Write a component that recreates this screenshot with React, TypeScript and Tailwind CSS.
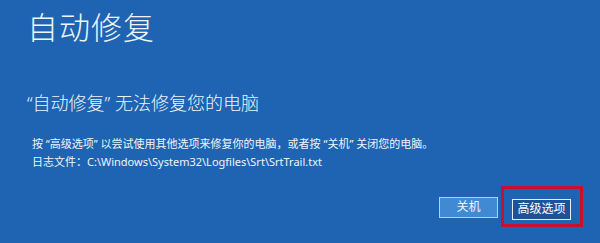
const font = "font-['Noto_Sans','Noto_Sans_CJK_SC',sans-serif]";

const App = () => {
  return (
    <div className={`w-[600px] h-[243px] bg-[#1e64b2] text-[#eef4fb] flex flex-col ${font}`}>
      <h1 className="pl-[27px] pt-[12px] text-[31px] leading-none font-light tracking-[1px]">
        自动修复
      </h1>
      <h2 className="pl-[27px] mt-[51px] text-[18px] leading-none font-light">
        “自动修复” 无法修复您的电脑
      </h2>
      <div className="pl-[32px] mt-[23px] text-[11px] leading-[18px]">
        <p>按 “高级选项” 以尝试使用其他选项来修复你的电脑，或者按 “关机” 关闭您的电脑。</p>
        <p>日志文件：C:\Windows\System32\Logfiles\Srt\SrtTrail.txt</p>
      </div>
      <div className="flex items-center justify-end pr-[17px] mt-[15px] gap-[3px]">
        <button className="w-[59px] h-[21px] mt-[2px] bg-[#3f8ad2] border border-[#a8d4f8] text-[12px] text-[#eef6ff] leading-none">
          关机
        </button>
        <div className="border-[3px] border-[#c8102e] pt-[6px] pb-[4px] pl-[8px] pr-[9px]">
          <button className="w-[59px] h-[21px] bg-[#1d5296] border border-[#e4eefa] text-[12px] text-white leading-none">
            高级选项
          </button>
        </div>
      </div>
    </div>
  );
};

export default App;
